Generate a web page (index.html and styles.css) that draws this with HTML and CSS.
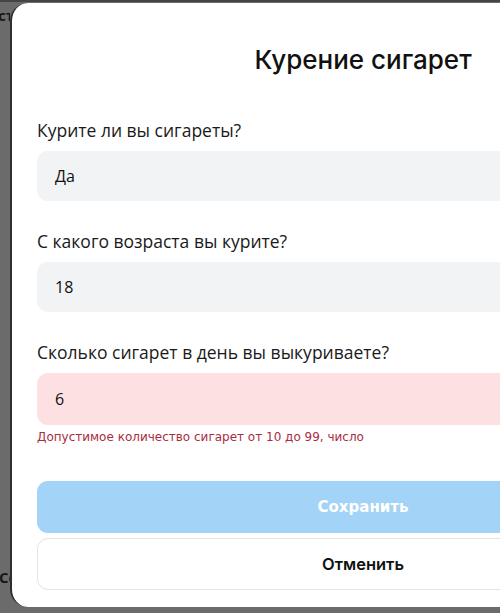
FILE: index.html
```html
<!DOCTYPE html>
<html lang="ru">
<head>
<meta charset="utf-8">
<title>Курение сигарет</title>
<link rel="stylesheet" href="styles.css">
</head>
<body>
<div class="page">
  <div class="backdrop-col">
    <span class="bg-text top">ст</span>
    <span class="bg-text bottom">Се</span>
  </div>
  <div class="modal">
    <h1 class="title">Курение сигарет</h1>
    <div class="field first">
      <label class="label">Курите ли вы сигареты?</label>
      <div class="input">Да</div>
    </div>
    <div class="field">
      <label class="label">С какого возраста вы курите?</label>
      <div class="input">18</div>
    </div>
    <div class="field">
      <label class="label">Сколько сигарет в день вы выкуриваете?</label>
      <div class="input error">6</div>
      <div class="error-text">Допустимое количество сигарет от 10 до 99, число</div>
    </div>
    <div class="actions">
      <button class="btn save">Сохранить</button>
      <button class="btn cancel">Отменить</button>
    </div>
  </div>
</div>
</body>
</html>
```

FILE: styles.css
```css
html, body {
  margin: 0;
  padding: 0;
  background: #6b6b6b;
}
body {
  width: 500px;
  height: 613px;
  overflow: hidden;
}
.page {
  display: flex;
  height: 613px;
  box-sizing: border-box;
  padding-top: 3px;
  background: #6b6b6b;
  border-top: 2px solid #454545;
  overflow: hidden;
}
.backdrop-col {
  flex: 0 0 10px;
  display: flex;
  flex-direction: column;
  justify-content: space-between;
  overflow: hidden;
  padding: 2px 0 28px;
  box-sizing: border-box;
  background: #6b6b6b;
}
.bg-text {
  font-family: "Open Sans", "DejaVu Sans", sans-serif;
  font-size: 15px;
  font-weight: 700;
  color: #161616;
  line-height: 16px;
  white-space: nowrap;
}
.bg-text.top {
  margin-left: -2px;
}
.bg-text.bottom {
  margin-left: -1px;
}
.modal {
  flex: 0 0 705px;
  height: 604px;
  margin-top: -2px;
  box-sizing: border-box;
  background: #ffffff;
  border-radius: 18px;
  border-left: 2px solid #2e2e2e;
  padding: 41px 26px 0 25px;
  display: flex;
  flex-direction: column;
}
.title {
  margin: 0;
  text-align: center;
  font-family: Inter, "DejaVu Sans", sans-serif;
  font-weight: 500;
  font-size: 26px;
  line-height: 32px;
  color: #111111;
}
.field {
  display: flex;
  flex-direction: column;
  gap: 9px;
  margin-top: 28px;
}
.field.first {
  margin-top: 42px;
}
.label {
  font-family: "Open Sans", "Noto Sans", sans-serif;
  font-size: 17.5px;
  line-height: 24px;
  color: #1a1a1a;
}
.input {
  height: 50px;
  box-sizing: border-box;
  border-radius: 11px;
  background: #f2f3f5;
  padding-left: 18px;
  display: flex;
  align-items: center;
  font-family: "Open Sans", "Noto Sans", sans-serif;
  font-size: 16px;
  color: #111111;
}
.input.error {
  height: 52px;
  background: #fde1e2;
}
.error-text {
  margin-top: -4px;
  font-family: "DejaVu Sans", Verdana, sans-serif;
  font-size: 12px;
  line-height: 15px;
  color: #a92c42;
}
.actions {
  display: flex;
  flex-direction: column;
  gap: 5px;
  margin-top: 36px;
}
.btn {
  height: 52px;
  border-radius: 11px;
  width: 100%;
  cursor: pointer;
}
.save {
  border: 0;
  background: #a3d3f6;
  color: #ffffff;
  font-family: "DejaVu Sans", Verdana, sans-serif;
  font-weight: bold;
  font-size: 15px;
}
.cancel {
  background: #ffffff;
  border: 1px solid #e4e4e4;
  color: #111111;
  font-family: Inter, "DejaVu Sans", sans-serif;
  font-weight: 600;
  font-size: 16.5px;
}
```
